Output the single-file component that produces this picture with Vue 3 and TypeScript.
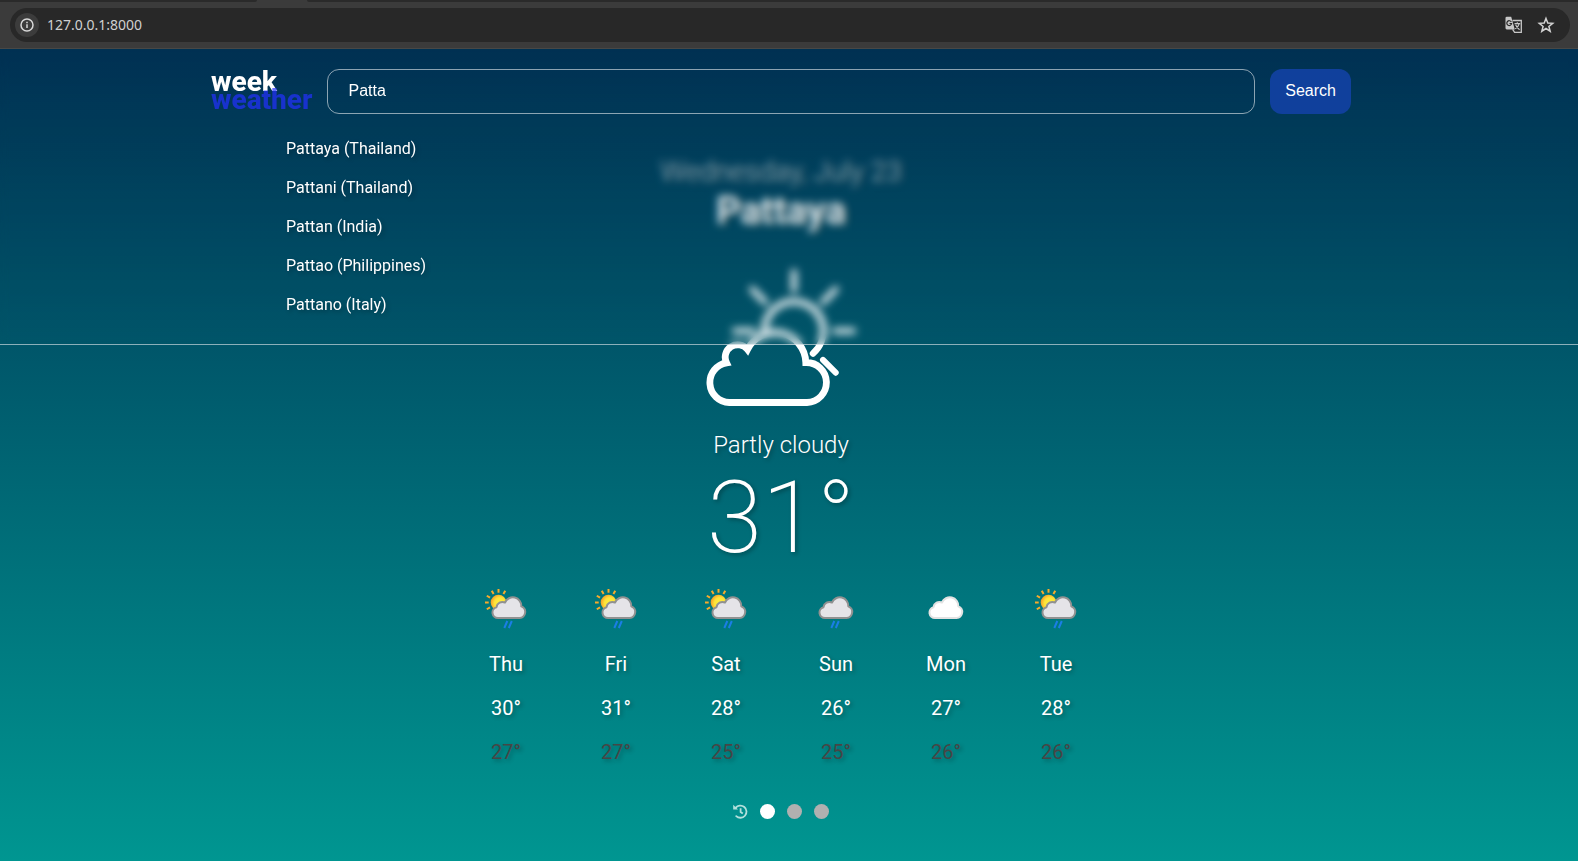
<script setup lang="ts">
import { ref } from 'vue'

type Sky = 'sun-rain' | 'rain' | 'cloud'

interface Day {
  name: string
  sky: Sky
  high: number
  low: number
}

const address = ref('127.0.0.1:8000')
const query = ref('Patta')
const activePage = ref(0)

const suggestions: string[] = [
  'Pattaya (Thailand)',
  'Pattani (Thailand)',
  'Pattan (India)',
  'Pattao (Philippines)',
  'Pattano (Italy)',
]

const days: Day[] = [
  { name: 'Thu', sky: 'sun-rain', high: 30, low: 27 },
  { name: 'Fri', sky: 'sun-rain', high: 31, low: 27 },
  { name: 'Sat', sky: 'sun-rain', high: 28, low: 25 },
  { name: 'Sun', sky: 'rain', high: 26, low: 25 },
  { name: 'Mon', sky: 'cloud', high: 27, low: 26 },
  { name: 'Tue', sky: 'sun-rain', high: 28, low: 26 },
]

const bigRays = [180, 225, 270, 315, 0, 45]
const smallRays = [150, 180, 210, 240, 270, 300]
</script>

<template>
  <div class="window">
    <div class="browser">
      <div class="tabs"><span class="tab-left"></span><span class="tab-right"></span></div>
      <div class="omnibox">
        <button class="info" type="button" aria-label="Site information">
          <svg width="16" height="16" viewBox="0 0 16 16" fill="none" stroke="#d8d8d8" stroke-width="1.5">
            <circle cx="8" cy="8" r="6" />
            <path d="M8 7.2V11M8 4.8v1.5" />
          </svg>
        </button>
        <input v-model="address" class="address" type="text" aria-label="Address" />
        <button class="tool" type="button" aria-label="Translate">
          <svg width="18" height="18" viewBox="0 0 18 18" fill="none">
            <path d="M7.5 4.5H16.3V16.4H9.6L7.6 13.4" stroke="#c7c7c7" stroke-width="1.3" />
            <path d="M1.8 .8H6.2L9.8 13.4H1.8a1.3 1.3 0 0 1-1.3-1.3V2.1A1.3 1.3 0 0 1 1.8 .8Z" fill="#c7c7c7" />
            <path d="M6.3 5.9A2.4 2.4 0 1 0 6.6 7.5H4.5" stroke="#282828" stroke-width="1.2" />
            <path d="M9.5 7.6H15.2M12.3 6.3V7.6M14.2 7.6C13.7 10 12 11.7 10.2 12.8M10.6 8.8C11.4 10.8 12.8 12.4 14.6 13.7" stroke="#c7c7c7" stroke-width="1.1" />
          </svg>
        </button>
        <button class="tool" type="button" aria-label="Bookmark this page">
          <svg width="18" height="18" viewBox="0 0 18 18" fill="none" stroke="#d2d2d2" stroke-width="1.5">
            <path d="M9 2.4 10.8 7 15.7 7.3 11.9 10.4 13.2 15.2 9 12.5 4.8 15.2 6.1 10.4 2.3 7.3 7.2 7Z" />
          </svg>
        </button>
      </div>
    </div>

    <div class="page">
      <header class="header">
        <a class="logo" href="#"><span class="week">week</span><span class="weather">weather</span></a>
        <form class="search" @submit.prevent>
          <input v-model="query" class="field" type="text" aria-label="City" />
          <button class="submit" type="submit">Search</button>
        </form>
      </header>

      <main class="current">
        <p class="date">Wednesday, July 23</p>
        <h1 class="city">Pattaya</h1>
        <svg class="sky" width="170" height="160" viewBox="0 0 170 160" fill="none" stroke="#fff">
          <g stroke-width="6" stroke-linecap="round">
            <path
              v-for="angle in bigRays"
              :key="angle"
              d="M139 75H157"
              :transform="`rotate(${angle} 98 75)`"
            />
          </g>
          <path d="M68.5 77A29.5 29.5 0 1 1 117 97.5" stroke-width="6.5" stroke-linecap="round" />
          <path
            d="M111 146.5H33.3A20 20 0 0 1 30.5 106.8A12.5 12.5 0 0 1 51.5 93.5A30.8 30.8 0 0 1 109.8 106.5A20 20 0 0 1 111 146.5Z"
            stroke-width="6.8"
          />
        </svg>
        <p class="condition">Partly cloudy</p>
        <p class="temperature">31°</p>
      </main>

      <ul class="forecast">
        <li v-for="day in days" :key="day.name" class="day">
          <svg width="64" height="64" viewBox="0 0 64 64" fill="none">
            <defs>
              <radialGradient id="sun" cx=".6" cy=".55" r=".6">
                <stop offset="0" stop-color="#fff33b" />
                <stop offset=".6" stop-color="#fde339" />
                <stop offset="1" stop-color="#f6a028" />
              </radialGradient>
            </defs>
            <g v-if="day.sky === 'sun-rain'">
              <circle cx="24.5" cy="25.5" r="7.8" fill="url(#sun)" />
              <path
                v-for="angle in smallRays"
                :key="angle"
                d="M34.3 25.5H38"
                stroke="#f9ab2a"
                stroke-width="2"
                :transform="`rotate(${angle} 24.5 25.5)`"
              />
            </g>
            <g :transform="day.sky === 'sun-rain' ? undefined : 'translate(-3 0)'">
              <path
                d="M24 41A5.5 5.5 0 0 1 22.5 30.2A6 6 0 0 1 31 25.5A8.5 8.5 0 0 1 47.3 29.4A6 6 0 0 1 45.5 41Z"
                :fill="day.sky === 'cloud' ? '#fff' : '#e5e4e8'"
                :stroke="day.sky === 'cloud' ? '#e2e2e2' : '#919191'"
                stroke-width="2"
                stroke-linejoin="round"
              />
              <path
                v-if="day.sky !== 'cloud'"
                d="M33.3 44 30.3 51M37.8 44 34.8 51"
                stroke="#1a7ee6"
                stroke-width="2"
              />
            </g>
          </svg>
          <span>{{ day.name }}</span>
          <span>{{ day.high }}°</span>
          <span class="low">{{ day.low }}°</span>
        </li>
      </ul>

      <nav class="pager" aria-label="Recent cities">
        <button class="history" type="button" aria-label="History">
          <svg width="15" height="15" viewBox="0 0 15 15" fill="none" stroke="#b3e0dc" stroke-width="1.8">
            <path d="M2.6 3.9A6.1 6.1 0 1 1 3.2 12.1" stroke-linecap="round" />
            <path d="M.2 .8V5.6H5Z" fill="#b3e0dc" stroke="none" />
            <path d="M7.6 4.2V8L9.8 9.6" />
          </svg>
        </button>
        <button
          v-for="n in 3"
          :key="n"
          class="dot"
          :class="{ active: activePage === n - 1 }"
          type="button"
          :aria-label="`Page ${n}`"
          @click="activePage = n - 1"
        ></button>
      </nav>

      <div class="dropdown">
        <ul class="suggestions">
          <li v-for="item in suggestions" :key="item"><a href="#">{{ item }}</a></li>
        </ul>
      </div>
    </div>
  </div>
</template>

<style>
body {
  margin: 0;
  background: #009490;
}
</style>

<style scoped>
* {
  box-sizing: border-box;
}

.window {
  display: flex;
  flex-direction: column;
  min-height: 100vh;
  font-family: Roboto, "Liberation Sans", sans-serif;
  color: #fff;
}

button,
input {
  margin: 0;
  padding: 0;
  border: 0;
  outline: 0;
  background: none;
  color: inherit;
}

ul {
  margin: 0;
  padding: 0;
  list-style: none;
}

.browser {
  height: 49px;
  background: #3b3b3b;
  border-bottom: 1px solid #484846;
}

.tabs {
  display: flex;
  gap: 50px;
  height: 2px;
  margin-bottom: 6px;
}

.tab-left {
  width: 257px;
  background: #2a2a2a;
  border-bottom-right-radius: 4px;
}

.tab-right {
  flex: 1;
  background: #2a2a2a;
  border-bottom-left-radius: 4px;
}

.omnibox {
  display: flex;
  align-items: center;
  height: 34px;
  margin: 0 8px 0 10px;
  padding: 0 15px 0 5px;
  border-radius: 17px;
  background: #282828;
}

.info {
  display: grid;
  place-items: center;
  width: 24px;
  height: 24px;
  border-radius: 50%;
  background: #3c3c3c;
}

.address {
  flex: 1;
  margin-left: 8px;
  font: 14px/20px "Noto Sans", sans-serif;
  color: #d0d0d0;
}

.tool {
  display: grid;
  place-items: center;
  width: 18px;
  height: 18px;
  margin-left: 14px;
}

.page {
  position: relative;
  display: flex;
  flex: 1;
  flex-direction: column;
  align-items: center;
  padding: 20px 16px 40px 0;
  background: linear-gradient(#003153, #009691);
}

.header {
  position: relative;
  z-index: 2;
  display: flex;
  gap: 15px;
  width: 100%;
  max-width: 1140px;
  height: 45px;
}

.logo {
  display: flex;
  flex-direction: column;
  padding-top: 4px;
  font-size: 28px;
  font-weight: 800;
  line-height: 18px;
  text-decoration: none;
}

.week {
  color: #fff;
}

.weather {
  color: rgba(34, 48, 255, 0.7);
}

.search {
  display: flex;
  flex: 1;
  gap: 15px;
  font-family: "Liberation Sans", Arial, sans-serif;
}

.field {
  flex: 1;
  min-width: 0;
  padding: 0 20px 2px;
  border: 1px solid rgba(255, 255, 255, 0.55);
  border-radius: 12px;
  font: inherit;
  font-size: 16px;
}

.submit {
  padding: 0 15px 2px;
  border-radius: 12px;
  background: #10409c;
  font: inherit;
  font-size: 16px;
}

.current {
  display: flex;
  flex-direction: column;
  align-items: center;
  padding-top: 40px;
  text-shadow: 2px 2px 4px rgba(0, 0, 0, 0.3);
}

.date,
.city,
.condition,
.temperature {
  margin: 0;
}

.date {
  font-size: 28px;
  font-weight: 300;
  line-height: 36px;
  color: rgba(255, 255, 255, 0.75);
}

.city {
  font-size: 38px;
  font-weight: 700;
  line-height: 42px;
}

.sky {
  display: block;
  margin-top: 24px;
}

.condition {
  margin-top: 14px;
  font-size: 24px;
  font-weight: 300;
  line-height: 30px;
}

.temperature {
  font-size: 100px;
  font-weight: 200;
  line-height: 116px;
}

.forecast {
  display: flex;
  margin-top: 1px;
}

.day {
  display: flex;
  flex-direction: column;
  align-items: center;
  width: 110px;
  font-size: 20px;
  line-height: 44px;
  text-shadow: 2px 2px 4px rgba(0, 0, 0, 0.3);
}

.day svg {
  margin-bottom: 1px;
}

.low {
  color: #464646;
}

.pager {
  display: flex;
  align-items: center;
  gap: 12px;
  margin-top: 30px;
}

.history,
.dot {
  display: block;
  width: 15px;
  height: 15px;
}

.history svg {
  display: block;
}

.dot {
  border-radius: 50%;
  background: #b0b0b0;
}

.dot.active {
  background: #fff;
}

.dropdown {
  position: absolute;
  z-index: 1;
  top: 0;
  right: 0;
  left: 0;
  padding: 80px 16px 20px 0;
  border-bottom: 1px solid rgba(255, 255, 255, 0.55);
  background: linear-gradient(rgba(0, 49, 83, 0.1), rgba(0, 86, 106, 0.1));
  backdrop-filter: blur(4px);
}

.suggestions {
  max-width: 1140px;
  margin: 0 auto;
  padding-left: 75px;
  font-size: 16px;
  line-height: 39px;
  text-shadow: 2px 2px 4px rgba(0, 0, 0, 0.3);
}

.suggestions a {
  color: #fff;
  text-decoration: none;
}
</style>
